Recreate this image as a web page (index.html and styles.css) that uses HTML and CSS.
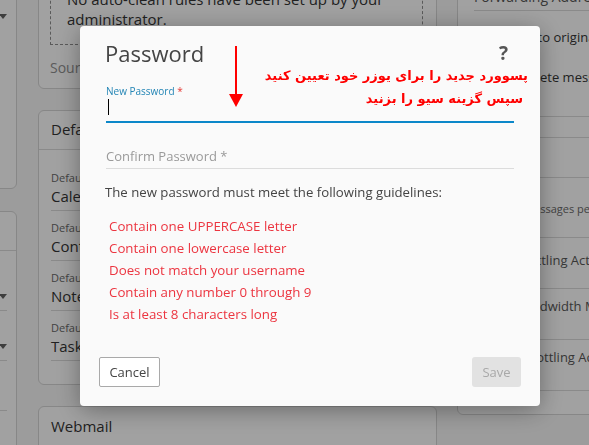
FILE: index.html
```html
<!DOCTYPE html>
<html lang="en">
<head>
<meta charset="utf-8">
<title>Password</title>
<link rel="stylesheet" href="styles.css">
</head>
<body>
<div class="page">
  <div class="col col-left">
    <div class="card lcard1">
      <div class="lsel"><span class="dd"></span></div>
    </div>
    <div class="card lcard2">
      <div class="card-head">Settings</div>
      <div class="lbody">
        <div class="lrow"><span class="dd"></span></div>
        <div class="lrow"><span class="dd"></span></div>
        <div class="lrow"></div>
      </div>
    </div>
  </div>

  <div class="col col-mid">
    <div class="card mcard1">
      <div class="dashed">No auto-clean rules have been set up by your<br>administrator.</div>
      <div class="muted">Source</div>
    </div>
    <div class="card mcard2">
      <div class="card-head">Default Folders</div>
      <div class="mbody">
        <div class="field"><div class="flabel">Default Calendar</div><div class="fvalue">Calendar</div></div>
        <div class="field"><div class="flabel">Default Contacts</div><div class="fvalue">Contacts</div></div>
        <div class="field"><div class="flabel">Default Notes</div><div class="fvalue">Notes</div></div>
        <div class="field"><div class="flabel">Default Tasks</div><div class="fvalue">Tasks</div></div>
      </div>
    </div>
    <div class="card mcard3">
      <div class="card-head">Webmail</div>
    </div>
  </div>

  <div class="col col-right">
    <div class="card rcard">
      <div class="r-top">Forwarding Address</div>
      <div class="r-opts">
        <div class="r-opt r-o1">Send copy to original sender</div>
        <div class="r-opt r-o2"><span class="tgl"></span>Delete messages when forwarded</div>
      </div>
      <div class="r-gap r-gap1"></div>
      <div class="r-gap r-gap2"></div>
      <div class="r-gap r-gap3"></div>
      <div class="r-field r-f1"><span class="r-small">Outgoing Messages per Hour</span></div>
      <div class="r-field r-f2">Msg Throttling Action</div>
      <div class="r-field r-f3">Max Bandwidth MB per Hour</div>
      <div class="r-field r-f4">BW Throttling Action</div>
    </div>
  </div>
</div>

<div class="overlay"></div>

<div class="modal">
  <div class="modal-head">
    <div class="modal-title">Password</div>
    <div class="help">?</div>
  </div>
  <div class="modal-body">
    <div class="fld-new">
      <label class="lbl-new">New Password <span class="req">*</span></label>
      <div class="inp-new"><span class="caret"></span></div>
    </div>
    <div class="fld-confirm">Confirm Password *</div>
    <p class="guide">The new password must meet the following guidelines:</p>
    <ul class="rules">
      <li>Contain one UPPERCASE letter</li>
      <li>Contain one lowercase letter</li>
      <li>Does not match your username</li>
      <li>Contain any number 0 through 9</li>
      <li>Is at least 8 characters long</li>
    </ul>
  </div>
  <div class="modal-foot">
    <button class="btn btn-cancel">Cancel</button>
    <button class="btn btn-save">Save</button>
  </div>

  <svg class="anno-arrow" width="14" height="62" viewBox="0 0 14 62">
    <line x1="7" y1="0" x2="7" y2="50" stroke="#ff0000" stroke-width="2"/>
    <polygon points="0,48 14,48 7,61" fill="#ff0000"/>
  </svg>
  <div class="anno-text" dir="rtl" lang="fa">
    <div class="anno-l1">پسوورد جدید را برای یوزر خود تعیین کنید</div>
    <div class="anno-l2">سپس گزینه سیو را بزنید</div>
  </div>
</div>
</body>
</html>
```

FILE: styles.css
```css
* { box-sizing: border-box; }
html, body { margin: 0; padding: 0; }
body {
  width: 589px;
  height: 445px;
  overflow: hidden;
  position: relative;
  background: #f0f0f0;
  color: #333;
  font-family: "Open Sans", "Noto Sans", sans-serif;
  font-size: 14px;
}

/* ---------- background page ---------- */
.page {
  display: flex;
  align-items: flex-start;
  margin-top: -40px;
  margin-left: -200px;
}
.col { flex: none; display: flex; flex-direction: column; }
.col-left { width: 217px; gap: 22px; }
.col-mid { width: 399px; margin-left: 21px; gap: 21px; }
.col-right { width: 300px; margin-left: 20px; }

.card {
  background: #f8f8f8;
  border: 1px solid #cfcfcf;
  border-radius: 6px;
}
.card-head {
  font-size: 15px;
  line-height: 20px;
  padding: 8px 12px 10px;
  border-bottom: 1px solid #d4d4d4;
  color: #333;
}

/* left column */
.lcard1 { height: 229px; padding: 40px 9px 0 12px; }
.lsel { height: 30px; display: flex; justify-content: flex-end; align-items: center; }
.dd {
  width: 0; height: 0;
  border-left: 4px solid transparent;
  border-right: 4px solid transparent;
  border-top: 5px solid #5e5e5e;
}
.lcard2 { height: 300px; }
.lbody { padding: 10px 9px 0 12px; }
.lrow {
  height: 50px;
  border-bottom: 1px solid #d4d4d4;
  display: flex;
  justify-content: flex-end;
  align-items: flex-end;
  padding-bottom: 11px;
}

/* middle column */
.mcard1 { padding: 14px 13px 10px 11px; }
.dashed {
  border: 1px dashed #8a8a8a;
  padding: 13px 16px 15px;
  font-size: 15px;
  line-height: 20px;
  color: #333;
}
.muted { margin-top: 13px; line-height: 20px; color: #8c8c8c; font-size: 14px; }
.mbody { padding: 11px 12px 23px; }
.field { height: 50px; border-bottom: 1px solid #d4d4d4; padding-top: 10px; }
.flabel { font-size: 11px; line-height: 14px; color: #666; }
.fvalue { font-size: 15px; line-height: 20px; margin-top: 1px; color: #333; }
.mcard3 { height: 80px; }
.mcard3 .card-head { border-bottom: none; padding-top: 9px; }

/* right column */
.rcard { height: 455px; padding: 0 16px; }
.r-top {
  padding-top: 26px;
  padding-bottom: 3px;
  line-height: 20px;
  border-bottom: 1px solid #d4d4d4;
  color: #555;
  white-space: nowrap;
}
.r-opts { padding-top: 16px; }
.r-opt {
  line-height: 20px;
  height: 40px;
  color: #333;
  font-size: 13px;
  display: flex;
  align-items: flex-start;
  white-space: nowrap;
}
.r-o1 { margin-left: -2px; }
.tgl { width: 36px; height: 18px; margin-right: 10px; border-radius: 9px; background: #ccc; flex: none; }
.r-gap { border-bottom: 1px solid #d4d4d4; }
.r-gap1 { height: 10px; }
.r-gap2 { height: 21px; }
.r-gap3 { height: 40px; }
.r-field { border-bottom: 1px solid #d4d4d4; color: #555; font-size: 13px; line-height: 20px; white-space: nowrap; }
.r-f1 { height: 60px; padding-top: 20px; }
.r-small { font-size: 11px; color: #666; }
.r-f2 { height: 51px; padding-top: 12px; text-indent: 6px; }
.r-f3 { height: 51px; padding-top: 7px; text-indent: 13px; }
.r-f4 { height: 51px; padding-top: 7px; text-indent: 18px; }

/* ---------- overlay ---------- */
.overlay {
  position: fixed;
  inset: 0;
  background: rgba(0, 0, 0, 0.35);
}

/* ---------- modal ---------- */
.modal {
  position: fixed;
  left: 80px;
  top: 26px;
  width: 460px;
  height: 380px;
  background: #fafafa;
  border-radius: 4px;
  box-shadow: 0 4px 24px rgba(0, 0, 0, 0.35);
  display: flex;
  flex-direction: column;
}
.modal-head {
  height: 58px;
  padding: 12px 32px 0 25px;
  display: flex;
  justify-content: space-between;
  align-items: flex-start;
}
.modal-title { font-size: 22px; line-height: 30px; color: #444; }
.help { font-size: 19px; line-height: 30px; font-weight: 700; color: #555; }

.modal-body { padding: 0 26px 0 26px; }
.lbl-new { display: block; font-size: 10px; line-height: 14px; color: #2385b5; }
.req { color: #e53935; }
.inp-new { height: 25px; border-bottom: 2px solid #0b87c9; padding: 1px 0 0 2px; }
.caret { display: block; width: 1px; height: 16px; background: #000; }
.fld-confirm {
  padding-top: 23px;
  padding-bottom: 2px;
  line-height: 20px;
  font-size: 13px;
  color: #9a9a9a;
  border-bottom: 1px solid #dcdcdc;
}
.guide { margin: 13px 0 0 -1px; line-height: 20px; color: #444; font-size: 13.2px; }
.rules { list-style: none; margin: 13px 0 0 3px; padding: 0; }
.rules li { line-height: 22px; color: #ec3540; font-size: 13.3px; }

.modal-foot {
  margin-top: auto;
  padding: 0 19px 19px;
  display: flex;
  justify-content: space-between;
}
.btn {
  height: 30px;
  font-family: inherit;
  font-size: 13px;
  border-radius: 2px;
  padding: 0;
}
.btn-cancel { width: 61px; background: #fff; border: 1px solid #a9a9a9; color: #444; }
.btn-save { width: 49px; background: #e2e2e2; border: none; color: #a8a8a8; border-radius: 3px; }

/* annotation drawn over the dialog */
.anno-arrow { position: absolute; left: 149px; top: 20px; }
.anno-text {
  position: absolute;
  right: 12px;
  top: 38px;
  font-family: "DejaVu Sans", sans-serif;
  font-weight: 700;
  font-size: 13px;
  line-height: 23px;
  color: #ff0000;
  text-align: right;
}
.anno-l2 { padding-right: 5px; }
```
